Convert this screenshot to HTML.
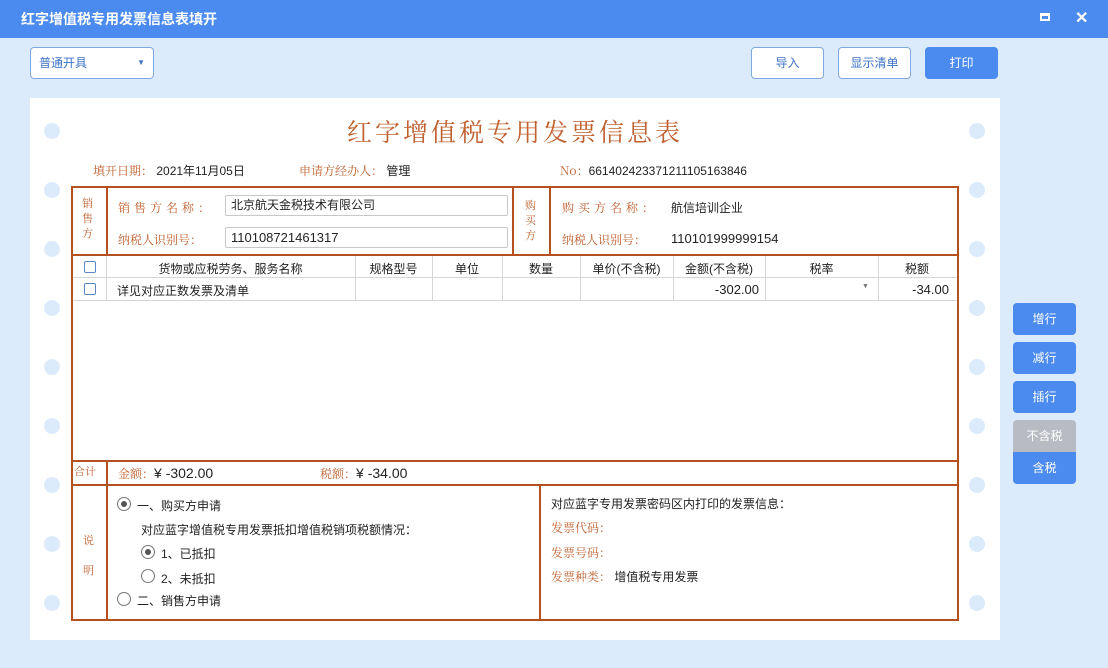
<!DOCTYPE html>
<html><head><meta charset="utf-8"><style>
*{margin:0;padding:0;box-sizing:border-box}
body{width:1108px;height:668px;overflow:hidden;background:#dcebfb;font-family:"Liberation Sans","Noto Sans CJK SC",sans-serif;font-size:12px;color:#222;position:relative}
.a{position:absolute}
.tb{left:0;top:0;width:1108px;height:38px;background:#4b8bef;color:#fff;font-size:14px;font-weight:bold;line-height:38px;padding-left:21px}
.btn{height:32px;border:1px solid #7fa8e0;border-radius:4px;background:#fff;color:#3e73c8;text-align:center;line-height:30px;font-size:12px}
.paper{left:30px;top:98px;width:970px;height:542px;background:#fff}
.dot{width:16px;height:16px;border-radius:50%;background:#dcebfb}
.r{color:#c0602e;font-family:"Noto Serif CJK SC",serif}
.ln{background:#b5501f}
.g{background:#d6d6d6}
.inp{border:1px solid #c8c8c8;border-radius:2px;height:21px;line-height:19px;padding-left:5px;font-size:12px;background:#fff}
.cb{width:12px;height:12px;border:1px solid #5a86c8;border-radius:2px;background:#fff}
.rb{width:14px;height:14px;border:1px solid #777;border-radius:50%;background:#fff}
.rb.on::after{content:"";position:absolute;left:3px;top:3px;width:6px;height:6px;border-radius:50%;background:#555}
.sb{left:1013px;width:63px;height:32px;background:#4b8bef;color:#fff;border-radius:4px;text-align:center;line-height:32px;font-size:12px}
.c{text-align:center}
</style></head><body>
<div class="a tb">红字增值税专用发票信息表填开</div>
<div class="a" style="left:1040px;top:13px;width:10px;height:8px;border:2px solid #fff;border-top-width:3px"></div>
<div class="a" style="left:1075px;top:8px;color:#fff;font-size:16px;font-weight:bold">✕</div>
<div class="a btn" style="left:30px;top:47px;width:124px;text-align:left;padding-left:8px">普通开具<span style="position:absolute;right:8px;top:0;font-size:8px">▼</span></div>
<div class="a btn" style="left:751px;top:47px;width:73px">导入</div>
<div class="a btn" style="left:838px;top:47px;width:73px">显示清单</div>
<div class="a btn" style="left:925px;top:47px;width:73px;background:#4b8bef;color:#fff;border-color:#4b8bef">打印</div>

<div class="a paper"></div>
<div class="a dot" style="left:44px;top:123px"></div><div class="a dot" style="left:969px;top:123px"></div>
<div class="a dot" style="left:44px;top:182px"></div><div class="a dot" style="left:969px;top:182px"></div>
<div class="a dot" style="left:44px;top:241px"></div><div class="a dot" style="left:969px;top:241px"></div>
<div class="a dot" style="left:44px;top:300px"></div><div class="a dot" style="left:969px;top:300px"></div>
<div class="a dot" style="left:44px;top:359px"></div><div class="a dot" style="left:969px;top:359px"></div>
<div class="a dot" style="left:44px;top:418px"></div><div class="a dot" style="left:969px;top:418px"></div>
<div class="a dot" style="left:44px;top:477px"></div><div class="a dot" style="left:969px;top:477px"></div>
<div class="a dot" style="left:44px;top:536px"></div><div class="a dot" style="left:969px;top:536px"></div>
<div class="a dot" style="left:44px;top:595px"></div><div class="a dot" style="left:969px;top:595px"></div>

<div class="a r" style="left:320px;top:113px;width:390px;text-align:center;font-size:25px;letter-spacing:3px">红字增值税专用发票信息表</div>
<div class="a" style="left:93px;top:162px"><span class="r">填开日期：</span> 2021年11月05日</div>
<div class="a" style="left:299px;top:162px"><span class="r">申请方经办人：</span> 管理</div>
<div class="a" style="left:560px;top:162px"><span class="r">No：</span>661402423371211105163846</div>

<div class="a" style="left:71px;top:186px;width:888px;height:435px;border:2px solid #b5501f"></div>
<div class="a ln" style="left:71px;top:254px;width:888px;height:2px"></div>
<div class="a ln" style="left:106px;top:186px;width:2px;height:70px"></div>
<div class="a ln" style="left:512px;top:186px;width:2px;height:70px"></div>
<div class="a ln" style="left:549px;top:186px;width:2px;height:70px"></div>
<div class="a r" style="left:82px;top:196px;font-size:11px;line-height:15px;width:14px">销售方</div>
<div class="a r" style="left:525px;top:198px;font-size:11px;line-height:15px;width:14px">购买方</div>
<div class="a r" style="left:118px;top:199px;letter-spacing:4px">销售方名称：</div>
<div class="a r" style="left:118px;top:231px">纳税人识别号：</div>
<div class="a inp" style="left:225px;top:195px;width:283px">北京航天金税技术有限公司</div>
<div class="a inp" style="left:225px;top:227px;width:283px;font-size:13px">110108721461317</div>
<div class="a r" style="left:562px;top:199px;letter-spacing:4px">购买方名称：</div>
<div class="a r" style="left:562px;top:231px">纳税人识别号：</div>
<div class="a" style="left:671px;top:199px">航信培训企业</div>
<div class="a" style="left:671px;top:231px;font-size:13px">110101999999154</div>

<div class="a g" style="left:73px;top:277px;width:884px;height:1px"></div>
<div class="a g" style="left:73px;top:300px;width:884px;height:1px"></div>
<div class="a g" style="left:106px;top:256px;width:1px;height:45px"></div>
<div class="a g" style="left:355px;top:256px;width:1px;height:45px"></div>
<div class="a g" style="left:432px;top:256px;width:1px;height:45px"></div>
<div class="a g" style="left:502px;top:256px;width:1px;height:45px"></div>
<div class="a g" style="left:580px;top:256px;width:1px;height:45px"></div>
<div class="a g" style="left:673px;top:256px;width:1px;height:45px"></div>
<div class="a g" style="left:765px;top:256px;width:1px;height:45px"></div>
<div class="a g" style="left:878px;top:256px;width:1px;height:45px"></div>
<div class="a cb" style="left:84px;top:261px"></div>
<div class="a cb" style="left:84px;top:283px"></div>
<div class="a c" style="left:106px;top:260px;width:249px">货物或应税劳务、服务名称</div>
<div class="a c" style="left:355px;top:260px;width:77px">规格型号</div>
<div class="a c" style="left:432px;top:260px;width:70px">单位</div>
<div class="a c" style="left:502px;top:260px;width:78px">数量</div>
<div class="a c" style="left:580px;top:260px;width:93px">单价(不含税)</div>
<div class="a c" style="left:673px;top:260px;width:92px">金额(不含税)</div>
<div class="a c" style="left:765px;top:260px;width:113px">税率</div>
<div class="a c" style="left:878px;top:260px;width:78px">税额</div>
<div class="a" style="left:117px;top:282px">详见对应正数发票及清单</div>
<div class="a" style="left:673px;top:282px;width:86px;text-align:right;font-size:13px">-302.00</div>
<div class="a" style="left:862px;top:283px;font-size:7px;color:#777">▼</div>
<div class="a" style="left:878px;top:282px;width:71px;text-align:right;font-size:13px">-34.00</div>

<div class="a ln" style="left:71px;top:460px;width:888px;height:2px"></div>
<div class="a ln" style="left:71px;top:484px;width:888px;height:2px"></div>
<div class="a ln" style="left:106px;top:460px;width:2px;height:160px"></div>
<div class="a ln" style="left:539px;top:484px;width:2px;height:136px"></div>
<div class="a r" style="left:74px;top:463px;font-size:11px">合计</div>
<div class="a" style="left:118px;top:465px;font-size:14px"><span class="r" style="font-size:12px">金额：</span>¥ -302.00</div>
<div class="a" style="left:320px;top:465px;font-size:14px"><span class="r" style="font-size:12px">税额：</span>¥ -34.00</div>

<div class="a r" style="left:83px;top:525px;font-size:11px;line-height:30px;width:12px">说明</div>
<div class="a rb on" style="left:117px;top:497px"></div>
<div class="a" style="left:137px;top:497px">一、购买方申请</div>
<div class="a" style="left:141px;top:521px">对应蓝字增值税专用发票抵扣增值税销项税额情况：</div>
<div class="a rb on" style="left:141px;top:545px"></div>
<div class="a" style="left:161px;top:545px">1、已抵扣</div>
<div class="a rb" style="left:141px;top:569px"></div>
<div class="a" style="left:161px;top:570px">2、未抵扣</div>
<div class="a rb" style="left:117px;top:592px"></div>
<div class="a" style="left:137px;top:592px">二、销售方申请</div>
<div class="a" style="left:551px;top:495px">对应蓝字专用发票密码区内打印的发票信息：</div>
<div class="a r" style="left:551px;top:519px">发票代码：</div>
<div class="a r" style="left:551px;top:544px">发票号码：</div>
<div class="a" style="left:551px;top:568px"><span class="r">发票种类：</span> 增值税专用发票</div>

<div class="a sb" style="top:303px">增行</div>
<div class="a sb" style="top:342px">减行</div>
<div class="a sb" style="top:381px">插行</div>
<div class="a sb" style="top:420px;background:#b8bcc2;border-radius:4px 4px 0 0">不含税</div>
<div class="a sb" style="top:452px;border-radius:0 0 4px 4px">含税</div>
</body></html>
